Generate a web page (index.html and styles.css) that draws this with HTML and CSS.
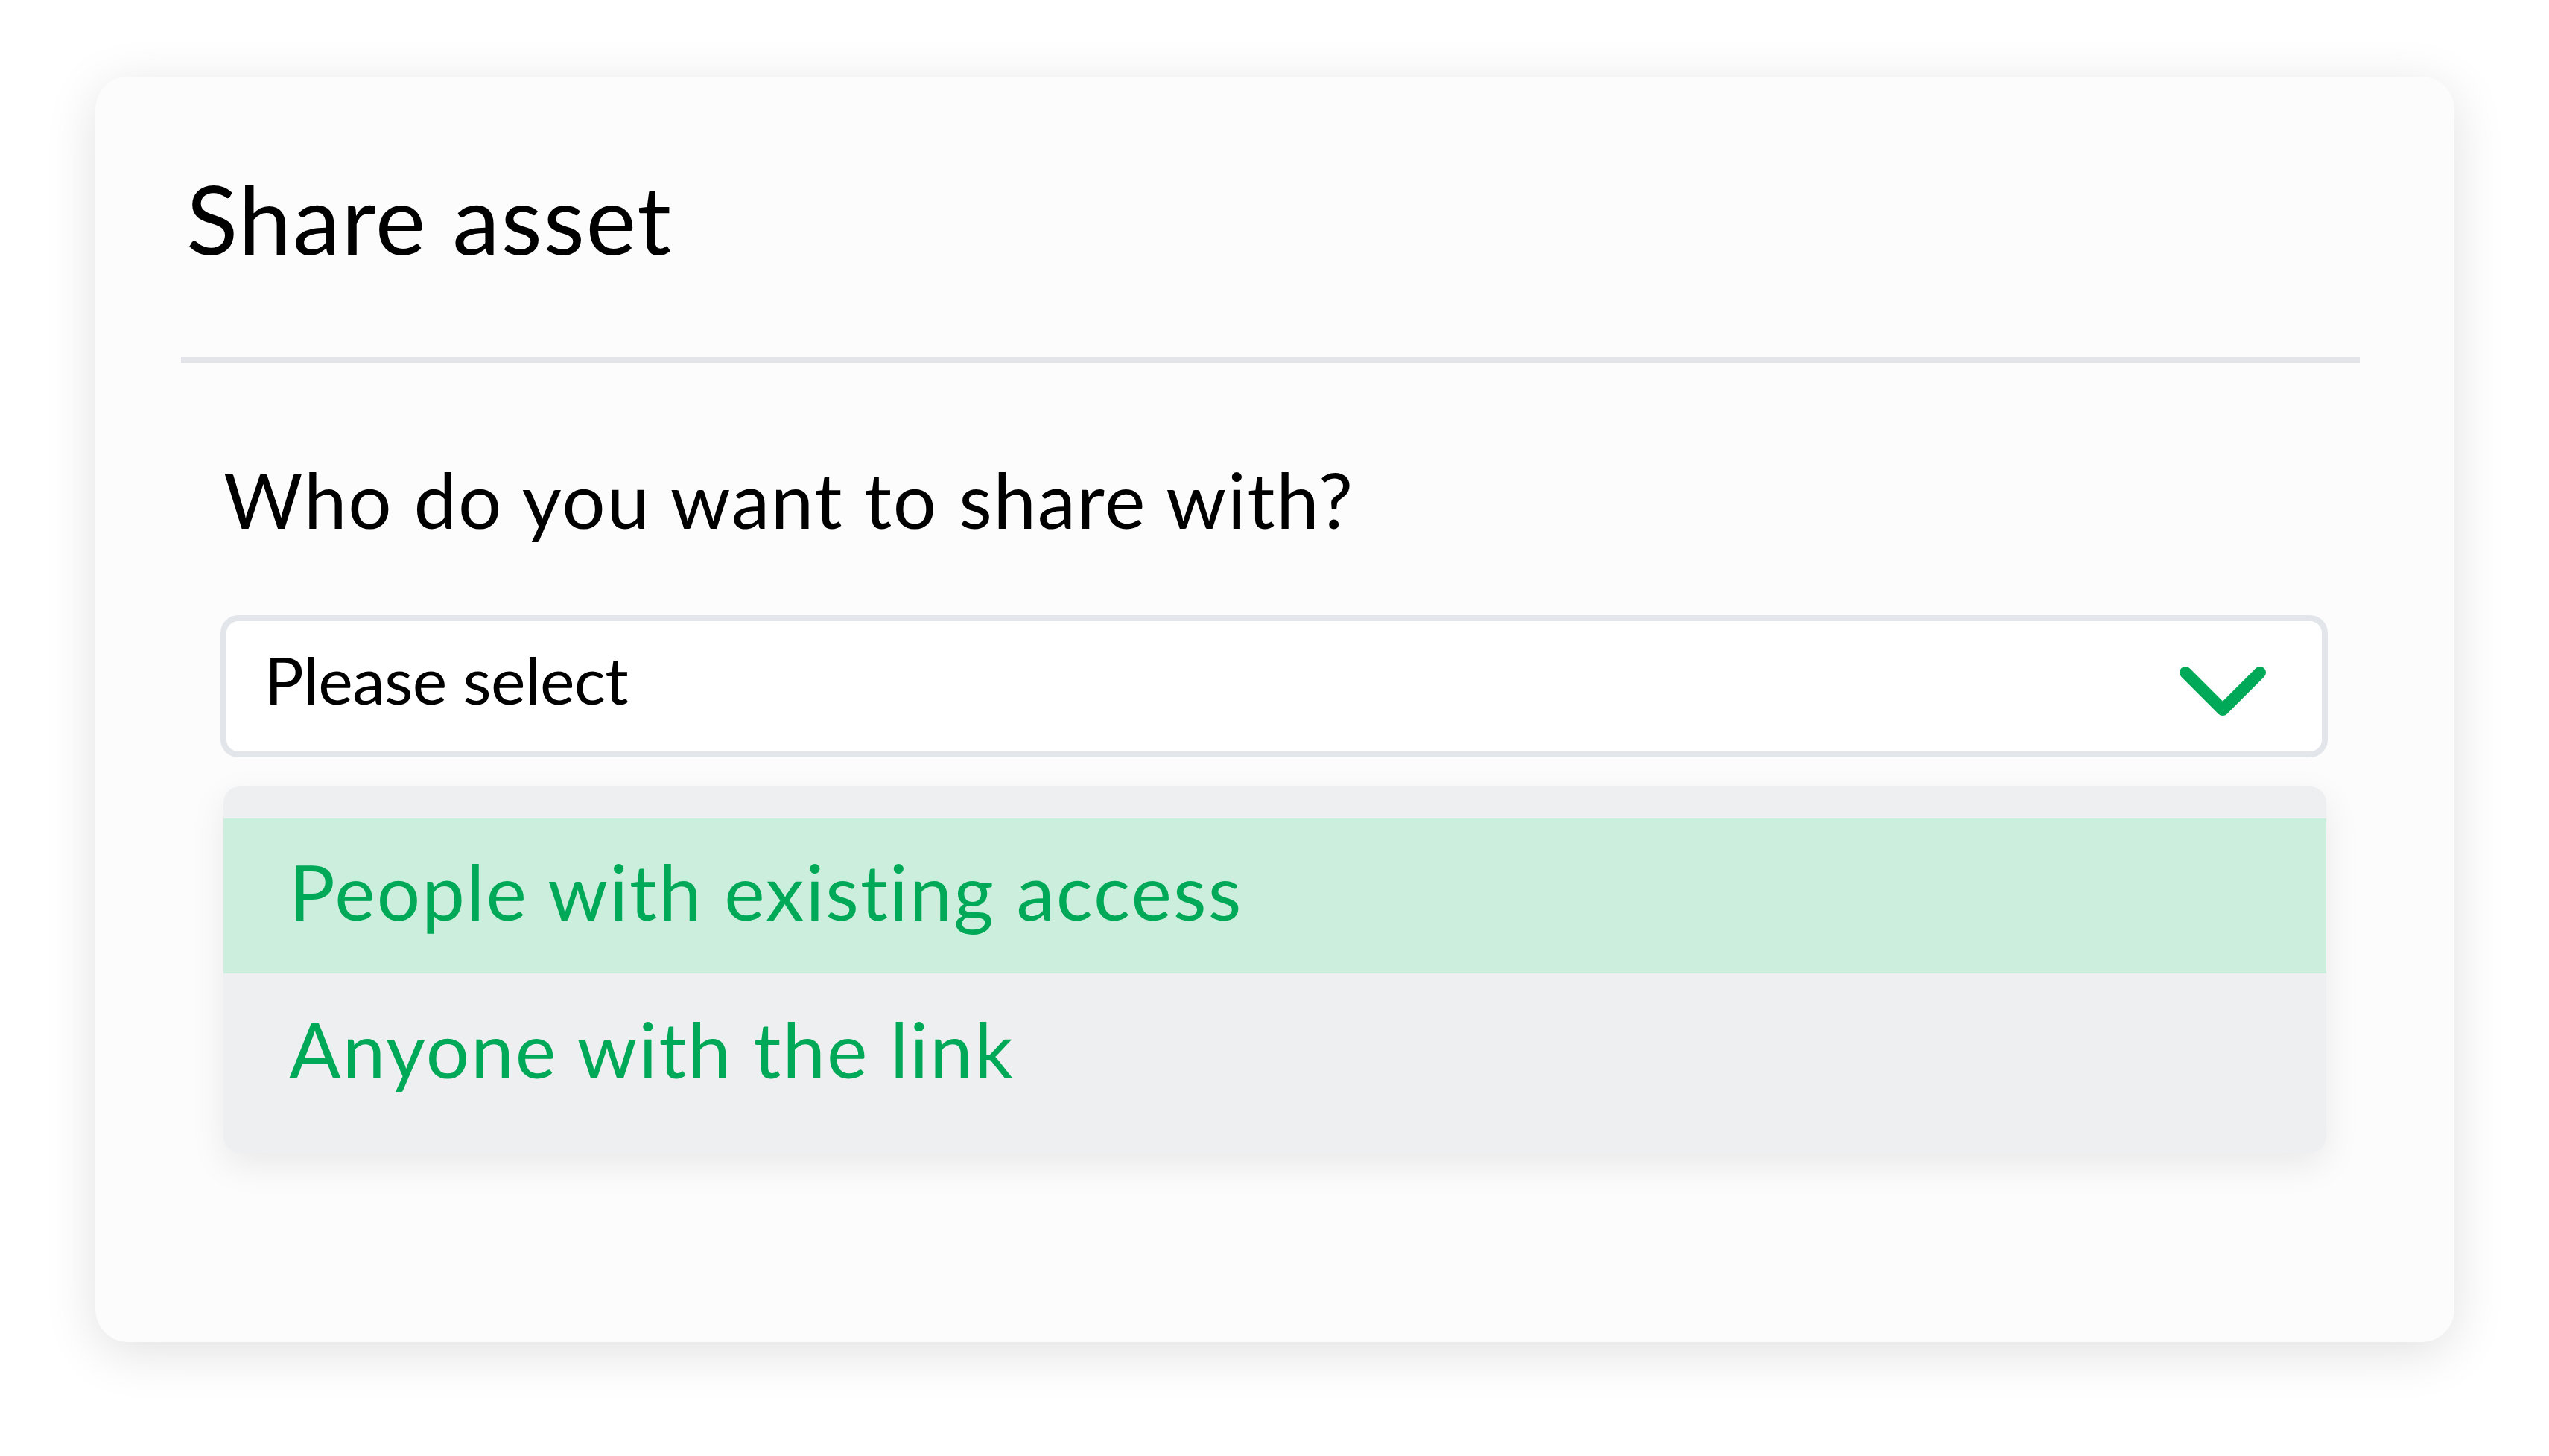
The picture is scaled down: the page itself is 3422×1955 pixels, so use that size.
FILE: index.html
```html
<!DOCTYPE html>
<html lang="en">
<head>
<meta charset="utf-8">
<title>Share asset</title>
<link rel="stylesheet" href="styles.css">
</head>
<body>
<div class="card">
  <header class="card-header">
    <h1 class="title">Share asset</h1>
  </header>
  <hr class="divider">
  <section class="card-body">
    <p class="question">Who do you want to share with?</p>
    <div class="select">
      <span class="select-value">Please select</span>
      <svg class="chevron" viewBox="0 0 116 68" width="116" height="68" aria-hidden="true">
        <path d="M8 8 L58 58 L108 8" fill="none" stroke="#00a957" stroke-width="16" stroke-linecap="round" stroke-linejoin="round"/>
      </svg>
    </div>
    <ul class="menu">
      <li class="option is-active">People with existing access</li>
      <li class="option">Anyone with the link</li>
    </ul>
  </section>
</div>
</body>
</html>
```
FILE: styles.css
```css
* { box-sizing: border-box; }
html, body { margin: 0; padding: 0; background: #ffffff; }
body {
  font-family: "Lato", "Noto Sans", sans-serif;
  font-variant-ligatures: none;
  font-feature-settings: "liga" 0, "clig" 0;
  color: #000;
  padding: 103px 0 0 128px;
  min-height: 1955px;
}
.card {
  width: 3167px;
  height: 1699px;
  background: #fcfcfc;
  border-radius: 44px;
  box-shadow: 0 14px 70px rgba(0, 0, 0, 0.12);
  display: flex;
  flex-direction: column;
}
.card-header { padding: 113px 0 0 122px; }
.title {
  margin: 0;
  font-size: 128px;
  font-weight: 400;
  line-height: 1.2;
  letter-spacing: 1.6px;
}
.divider {
  border: 0;
  height: 7px;
  background: #e2e4e9;
  margin: 110px 127px 0 115px;
}
.card-body {
  padding: 0 170px 0 168px;
  display: flex;
  flex-direction: column;
}
.question {
  margin: 122px 0 0 4px;
  font-size: 103px;
  line-height: 1.2;
  letter-spacing: 1.8px;
}
.select {
  margin-top: 94px;
  height: 191px;
  background: #fff;
  border: 8px solid #e2e5ea;
  border-radius: 24px;
  display: flex;
  align-items: center;
  justify-content: space-between;
  padding: 0 75px 0 51px;
}
.select-value {
  font-size: 88px;
  line-height: 1.2;
  letter-spacing: -0.6px;
  margin-bottom: 17px;
}
.chevron { display: block; margin-top: 15px; }
.menu {
  list-style: none;
  margin: 39px 2px 0 4px;
  padding: 43px 0 33px;
  background: #eeeff1;
  border-radius: 22px;
  box-shadow: 0 16px 48px rgba(0, 0, 0, 0.08);
}
.option {
  height: 208px;
  padding: 36px 0 0 88px;
  font-size: 103px;
  line-height: 1.2;
  letter-spacing: 2.1px;
  color: #00a957;
}
.option + .option { padding-top: 40px; }
.option.is-active { background: #cceedd; }
```
